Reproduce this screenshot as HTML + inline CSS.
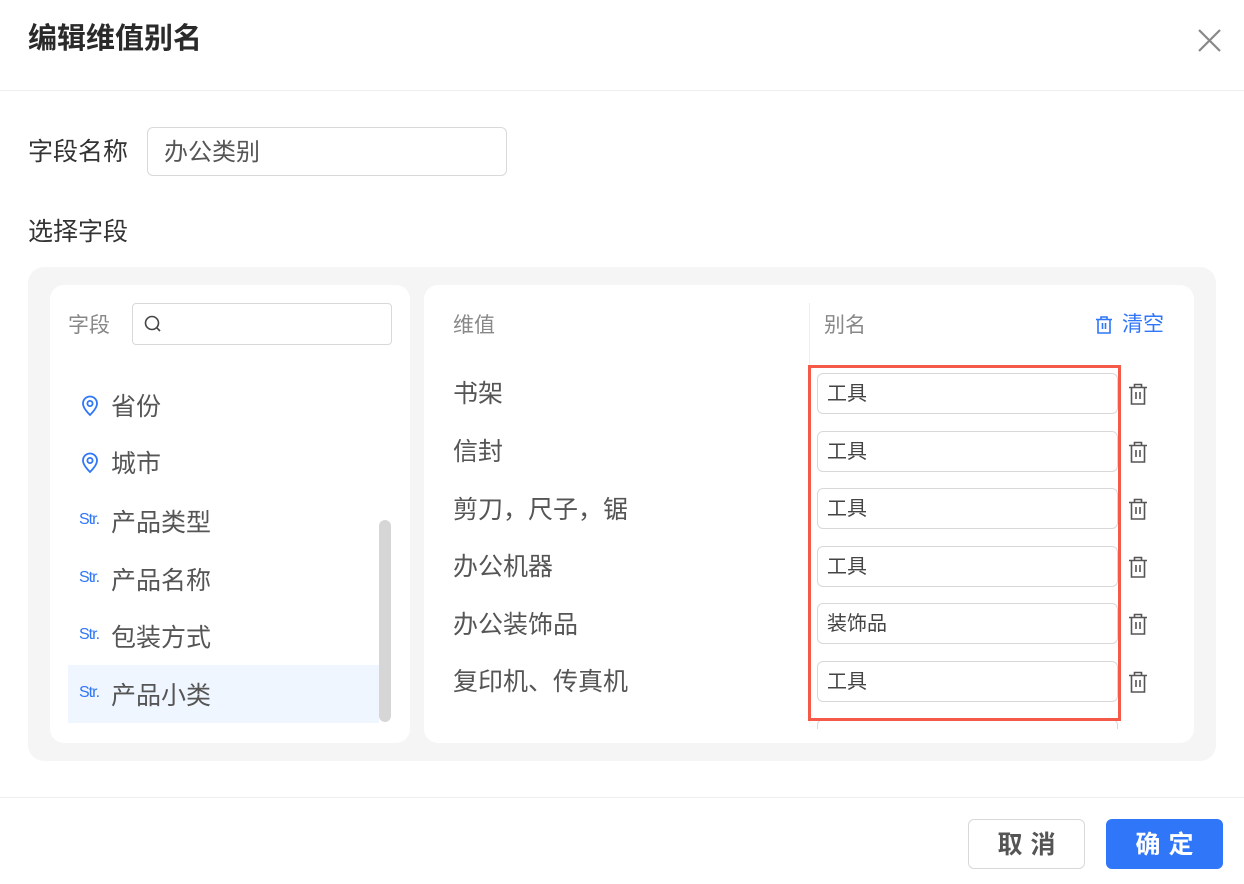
<!DOCTYPE html>
<html><head><meta charset="utf-8"><style>
*{margin:0;padding:0;box-sizing:border-box}
body{width:1244px;height:884px;background:#fff;font-family:"Liberation Sans","Noto Sans CJK SC",sans-serif;color:#333;position:relative;overflow:hidden}
.a{position:absolute;white-space:nowrap}
.row{font-size:25px;color:#555;line-height:30px}
.inp{position:absolute;left:817px;width:301px;height:41px;border:1px solid #d9d9d9;border-radius:6px;font-size:20px;color:#444;line-height:41px;padding-left:9px;background:#fff}
.tr{position:absolute;left:1128px;width:20px;height:24px}
.str{font-size:16px;color:#2f76f8;letter-spacing:-1px}
</style></head><body>
<div class="a" style="left:28px;top:19px;font-size:29px;font-weight:bold;color:#2a2a2a;line-height:40px">编辑维值别名</div>
<svg class="a" style="left:1198px;top:29px" width="23" height="23" viewBox="0 0 23 23"><path d="M1 1L22 22M22 1L1 22" stroke="#888" stroke-width="2.2"/></svg>
<div class="a" style="left:0;top:90px;width:1244px;height:1px;background:#eee"></div>
<div class="a" style="left:28px;top:136px;font-size:25px;line-height:32px;color:#333">字段名称</div>
<div class="a" style="left:147px;top:127px;width:360px;height:49px;border:1px solid #d9d9d9;border-radius:6px;font-size:24px;color:#555;line-height:49px;padding-left:16px">办公类别</div>
<div class="a" style="left:28px;top:216px;font-size:25px;line-height:32px;color:#333">选择字段</div>
<div class="a" style="left:28px;top:267px;width:1188px;height:494px;background:#f5f5f5;border-radius:16px"></div>
<div class="a" style="left:50px;top:285px;width:360px;height:458px;background:#fff;border-radius:14px"></div>
<div class="a" style="left:424px;top:285px;width:770px;height:458px;background:#fff;border-radius:14px"></div>
<div class="a" style="left:68px;top:312px;font-size:21px;color:#888;line-height:28px">字段</div>
<div class="a" style="left:132px;top:303px;width:260px;height:42px;border:1px solid #d9d9d9;border-radius:4px"></div>
<svg class="a" style="left:143px;top:314px" width="20" height="20" viewBox="0 0 20 20"><circle cx="9" cy="9" r="6.5" fill="none" stroke="#444" stroke-width="1.6"/><path d="M13.7 13.7L17 17" stroke="#444" stroke-width="1.6"/></svg>
<div class="a" style="left:68px;top:665px;width:311px;height:58px;background:#eff6ff"></div>
<div class="a" style="left:379px;top:520px;width:12px;height:202px;background:#d6d6d6;border-radius:6px"></div>
<svg class="a" style="left:80px;top:395px" width="20" height="22" viewBox="0 0 20 22"><path d="M10 20C5 15 3 11.5 3 8.5a7 7 0 0114 0c0 3-2 6.5-7 11.5z" fill="none" stroke="#2f76f8" stroke-width="1.8"/><circle cx="10" cy="8.5" r="2.6" fill="none" stroke="#2f76f8" stroke-width="1.8"/></svg>
<div class="a row" style="left:111px;top:392px">省份</div>
<svg class="a" style="left:80px;top:452px" width="20" height="22" viewBox="0 0 20 22"><path d="M10 20C5 15 3 11.5 3 8.5a7 7 0 0114 0c0 3-2 6.5-7 11.5z" fill="none" stroke="#2f76f8" stroke-width="1.8"/><circle cx="10" cy="8.5" r="2.6" fill="none" stroke="#2f76f8" stroke-width="1.8"/></svg>
<div class="a row" style="left:111px;top:449px">城市</div>
<div class="a str" style="left:79px;top:511px">Str.</div><div class="a row" style="left:111px;top:508px">产品类型</div>
<div class="a str" style="left:79px;top:569px">Str.</div><div class="a row" style="left:111px;top:566px">产品名称</div>
<div class="a str" style="left:79px;top:626px">Str.</div><div class="a row" style="left:111px;top:623px">包装方式</div>
<div class="a str" style="left:79px;top:684px">Str.</div><div class="a row" style="left:111px;top:681px">产品小类</div>
<div class="a" style="left:453px;top:312px;font-size:21px;color:#888;line-height:28px">维值</div>
<div class="a" style="left:809px;top:303px;width:1px;height:420px;background:#eee"></div>
<div class="a" style="left:824px;top:312px;font-size:21px;color:#888;line-height:28px">别名</div>
<svg class="a" style="left:1095px;top:315px" width="18" height="20" viewBox="0 0 18 20"><path d="M1 4.5h16M6 4.5V2h6v2.5M3 4.5V18h12V4.5M7.5 8v6M10.5 8v6" fill="none" stroke="#2f76f8" stroke-width="1.6"/></svg>
<div class="a" style="left:1122px;top:311px;font-size:21px;color:#2f76f8;line-height:28px">清空</div>
<div class="a row" style="left:453px;top:379px">书架</div>
<div class="a row" style="left:453px;top:437px">信封</div>
<div class="a row" style="left:453px;top:495px">剪刀，尺子，锯</div>
<div class="a row" style="left:453px;top:552px">办公机器</div>
<div class="a row" style="left:453px;top:610px">办公装饰品</div>
<div class="a row" style="left:453px;top:667px">复印机、传真机</div>
<div class="inp" style="top:373px">工具</div>
<div class="inp" style="top:431px">工具</div>
<div class="inp" style="top:488px">工具</div>
<div class="inp" style="top:546px">工具</div>
<div class="inp" style="top:603px">装饰品</div>
<div class="inp" style="top:661px">工具</div>
<div class="inp" style="top:719px;height:10px;border-bottom:none;border-radius:6px 6px 0 0"></div>
<div class="a" style="left:808px;top:365px;width:313px;height:356px;border:3px solid #f45a47"></div>
<svg class="tr" style="top:382px" viewBox="0 0 20 24"><path d="M1 5.5h18M6.5 5.5V2.5h7v3M3.5 5.5V22h13V5.5M8 10v7M12 10v7" fill="none" stroke="#555" stroke-width="1.6"/></svg>
<svg class="tr" style="top:440px" viewBox="0 0 20 24"><path d="M1 5.5h18M6.5 5.5V2.5h7v3M3.5 5.5V22h13V5.5M8 10v7M12 10v7" fill="none" stroke="#555" stroke-width="1.6"/></svg>
<svg class="tr" style="top:497px" viewBox="0 0 20 24"><path d="M1 5.5h18M6.5 5.5V2.5h7v3M3.5 5.5V22h13V5.5M8 10v7M12 10v7" fill="none" stroke="#555" stroke-width="1.6"/></svg>
<svg class="tr" style="top:555px" viewBox="0 0 20 24"><path d="M1 5.5h18M6.5 5.5V2.5h7v3M3.5 5.5V22h13V5.5M8 10v7M12 10v7" fill="none" stroke="#555" stroke-width="1.6"/></svg>
<svg class="tr" style="top:612px" viewBox="0 0 20 24"><path d="M1 5.5h18M6.5 5.5V2.5h7v3M3.5 5.5V22h13V5.5M8 10v7M12 10v7" fill="none" stroke="#555" stroke-width="1.6"/></svg>
<svg class="tr" style="top:670px" viewBox="0 0 20 24"><path d="M1 5.5h18M6.5 5.5V2.5h7v3M3.5 5.5V22h13V5.5M8 10v7M12 10v7" fill="none" stroke="#555" stroke-width="1.6"/></svg>
<div class="a" style="left:0;top:797px;width:1244px;height:1px;background:#eee"></div>
<div class="a" style="left:968px;top:819px;width:117px;height:50px;border:1px solid #d9d9d9;border-radius:6px;font-size:25px;color:#555;text-align:center;line-height:50px;letter-spacing:8px;padding-left:8px;font-weight:bold">取消</div>
<div class="a" style="left:1106px;top:819px;width:117px;height:50px;background:#2f76f8;border-radius:6px;font-size:25px;color:#fff;text-align:center;line-height:52px;letter-spacing:8px;padding-left:8px;font-weight:bold">确定</div>
</body></html>
